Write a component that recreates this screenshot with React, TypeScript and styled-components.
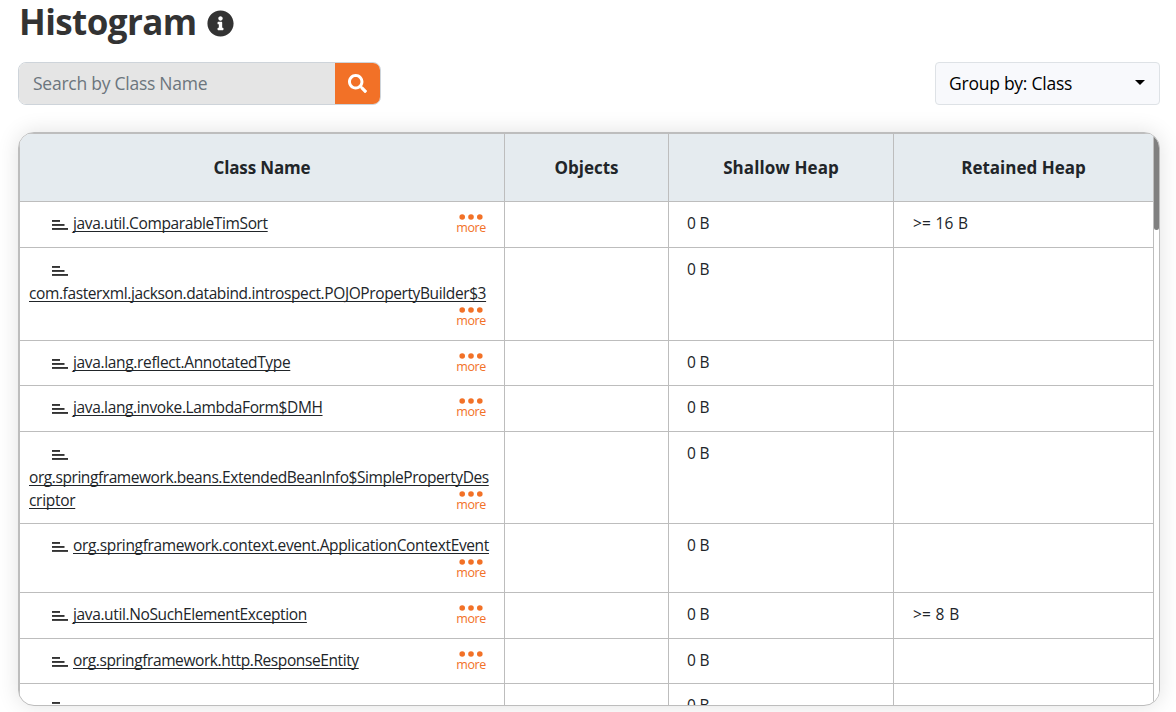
import React from "react";
import styled, { createGlobalStyle } from "styled-components";
import { FaSearch, FaInfoCircle } from "react-icons/fa";

const GlobalStyle = createGlobalStyle`
  * { box-sizing: border-box; }
  html, body { margin: 0; height: 712px; overflow: hidden; background: #fff; }
  body { font-family: "Open Sans", "Noto Sans", sans-serif; color: #212529; }
`;

const Page = styled.main`
  height: 712px;
  padding: 0 16px 0 18px;
  display: flex;
  flex-direction: column;
`;

const Title = styled.h1`
  display: flex;
  align-items: center;
  gap: 10px;
  height: 44px;
  margin: 0 0 18px;
  padding-left: 1px;
  font-size: 35px;
  line-height: 44px;
  font-weight: 700;
  letter-spacing: -0.6px;
  color: #333;
  svg { margin-top: 3px; }
`;

const Toolbar = styled.div`
  display: flex;
  justify-content: space-between;
  height: 43px;
  margin-bottom: 27px;
`;

const SearchBox = styled.form`
  display: flex;
  width: 363px;
  border: 1px solid #ced4da;
  border-radius: 8px;
  overflow: hidden;
`;

const SearchInput = styled.input`
  flex: 1;
  min-width: 0;
  border: 0;
  padding: 0 14px 1px;
  background: #e5e5e5;
  font: 400 17.5px "Open Sans", sans-serif;
  letter-spacing: -0.25px;
  &::placeholder { color: #6c757d; opacity: 1; }
`;

const SearchButton = styled.button`
  width: 45px;
  border: 0;
  padding: 0;
  display: flex;
  align-items: center;
  justify-content: center;
  background: #f27127;
  color: #fff;
`;

const GroupSelect = styled.button`
  display: flex;
  align-items: center;
  justify-content: space-between;
  width: 225px;
  padding: 0 14px 2px 13px;
  border: 1px solid #dee2e6;
  border-radius: 4px;
  background: #f8f9fc;
  color: #000;
  font: 400 17.5px "Open Sans", sans-serif;
  letter-spacing: -0.25px;
`;

const Caret = styled.span`
  border: 5px solid transparent;
  border-top-color: #000;
  border-bottom: 0;
  margin-top: -1px;
`;

const TableFrame = styled.section`
  display: flex;
  height: 574px;
  border: 1px solid #bdbdbd;
  border-radius: 16px;
  overflow: hidden;
  background: #fff;
  box-shadow: 0 0 22px rgba(0, 0, 0, 0.12);
`;

const Table = styled.div`
  width: 1135px;
  flex: none;
  border: 1px solid #bdbdbd;
  border-bottom: 0;
`;

const Row = styled.div<{ $h: number }>`
  display: grid;
  grid-template-columns: 485px 164px 225px 259px;
  height: ${(p) => p.$h}px;
  border-bottom: 1px solid #bdbdbd;
`;

const HeadRow = styled(Row)`
  background: #e5ebef;
`;

const HeadCell = styled.div<{ $ls?: number }>`
  display: flex;
  align-items: center;
  justify-content: center;
  border-right: 1px solid #bdbdbd;
  font-size: 17px;
  font-weight: 700;
  letter-spacing: ${(p) => p.$ls ?? 0}px;
  &:last-child { border-right: 0; }
`;

const Cell = styled.div<{ $ls?: number }>`
  padding: 10px 18px 0;
  border-right: 1px solid #bdbdbd;
  font-size: 15.5px;
  line-height: 23.6px;
  letter-spacing: ${(p) => p.$ls ?? 0}px;
  word-spacing: 0.5px;
  white-space: pre;
  &:last-child { border-right: 0; padding-left: 19px; }
`;

const ClassCell = styled(Cell)`
  padding: 10px 18px 0 9px;
`;

const Line = styled.div`
  display: flex;
  align-items: center;
  height: 23.6px;
`;

const Glyph = styled.svg`
  flex: none;
  margin: 3px 5px 0 23px;
`;

const ClassLink = styled.a<{ $ls: number }>`
  text-decoration: underline;
  text-underline-offset: 2px;
  text-decoration-thickness: 1px;
  text-decoration-skip-ink: none;
  letter-spacing: ${(p) => p.$ls}px;
`;

const MoreButton = styled.span`
  display: flex;
  flex-direction: column;
  align-items: center;
  width: 30px;
  margin-left: auto;
  color: #f27127;
  font-size: 12.5px;
  line-height: 13px;
  letter-spacing: -0.45px;
  svg { margin: 0 1px 1px 0; }
`;

const ScrollTrack = styled.div`
  width: 5px;
  background: #fff;
`;

const ScrollThumb = styled.div`
  height: 97px;
  border-radius: 3px;
  background: #808080;
`;

const BarsIcon = () => (
  <Glyph width="16" height="10" viewBox="0 0 16 10" fill="#333">
    <rect x="0" y="0" width="8" height="1.9" />
    <rect x="0" y="4" width="12.5" height="1.9" />
    <rect x="0" y="8" width="16" height="1.9" />
  </Glyph>
);

const More = () => (
  <MoreButton>
    <svg width="24" height="6" viewBox="0 0 24 6" fill="#f27127">
      <circle cx="3.2" cy="3" r="2.8" />
      <circle cx="12" cy="3" r="2.8" />
      <circle cx="20.8" cy="3" r="2.8" />
    </svg>
    more
  </MoreButton>
);

type Part = { text?: string; icon?: boolean; more?: boolean; ls?: number };
type Entry = { h: number; lines: Part[]; retained?: string };

const entries: Entry[] = [
  { h: 46, lines: [{ icon: true, text: "java.util.ComparableTimSort", more: true, ls: -0.38 }], retained: ">= 16 B" },
  { h: 93, lines: [{ icon: true }, { text: "com.fasterxml.jackson.databind.introspect.POJOPropertyBuilder$3", ls: -0.39 }, { more: true }] },
  { h: 45, lines: [{ icon: true, text: "java.lang.reflect.AnnotatedType", more: true, ls: -0.34 }] },
  { h: 46, lines: [{ icon: true, text: "java.lang.invoke.LambdaForm$DMH", more: true, ls: -0.37 }] },
  { h: 92, lines: [{ icon: true }, { text: "org.springframework.beans.ExtendedBeanInfo$SimplePropertyDes", ls: -0.425 }, { text: "criptor", more: true, ls: -0.3 }] },
  { h: 69, lines: [{ icon: true, text: "org.springframework.context.event.ApplicationContextEvent", ls: -0.355 }, { more: true }] },
  { h: 46, lines: [{ icon: true, text: "java.util.NoSuchElementException", more: true, ls: -0.37 }], retained: ">= 8 B" },
  { h: 45, lines: [{ icon: true, text: "org.springframework.http.ResponseEntity", more: true, ls: -0.4 }] },
  { h: 93, lines: [{ icon: true }] },
];

export default function App() {
  return (
    <>
      <GlobalStyle />
      <Page>
        <Title>
          Histogram <FaInfoCircle size={27} />
        </Title>
        <Toolbar>
          <SearchBox>
            <SearchInput placeholder="Search by Class Name" />
            <SearchButton type="button" aria-label="Search">
              <FaSearch size={19} />
            </SearchButton>
          </SearchBox>
          <GroupSelect>
            Group by: Class
            <Caret />
          </GroupSelect>
        </Toolbar>
        <TableFrame>
          <Table>
            <HeadRow $h={68}>
              <HeadCell $ls={-0.15}>Class Name</HeadCell>
              <HeadCell>Objects</HeadCell>
              <HeadCell $ls={0.08}>Shallow Heap</HeadCell>
              <HeadCell>Retained Heap</HeadCell>
            </HeadRow>
            {entries.map((entry, i) => (
              <Row key={i} $h={entry.h}>
                <ClassCell>
                  {entry.lines.map((line, j) => (
                    <Line key={j}>
                      {line.icon && <BarsIcon />}
                      {line.text && <ClassLink $ls={line.ls ?? 0}>{line.text}</ClassLink>}
                      {line.more && <More />}
                    </Line>
                  ))}
                </ClassCell>
                <Cell />
                <Cell $ls={-0.5}>0 B</Cell>
                <Cell $ls={0.1}>{entry.retained}</Cell>
              </Row>
            ))}
          </Table>
          <ScrollTrack>
            <ScrollThumb />
          </ScrollTrack>
        </TableFrame>
      </Page>
    </>
  );
}
